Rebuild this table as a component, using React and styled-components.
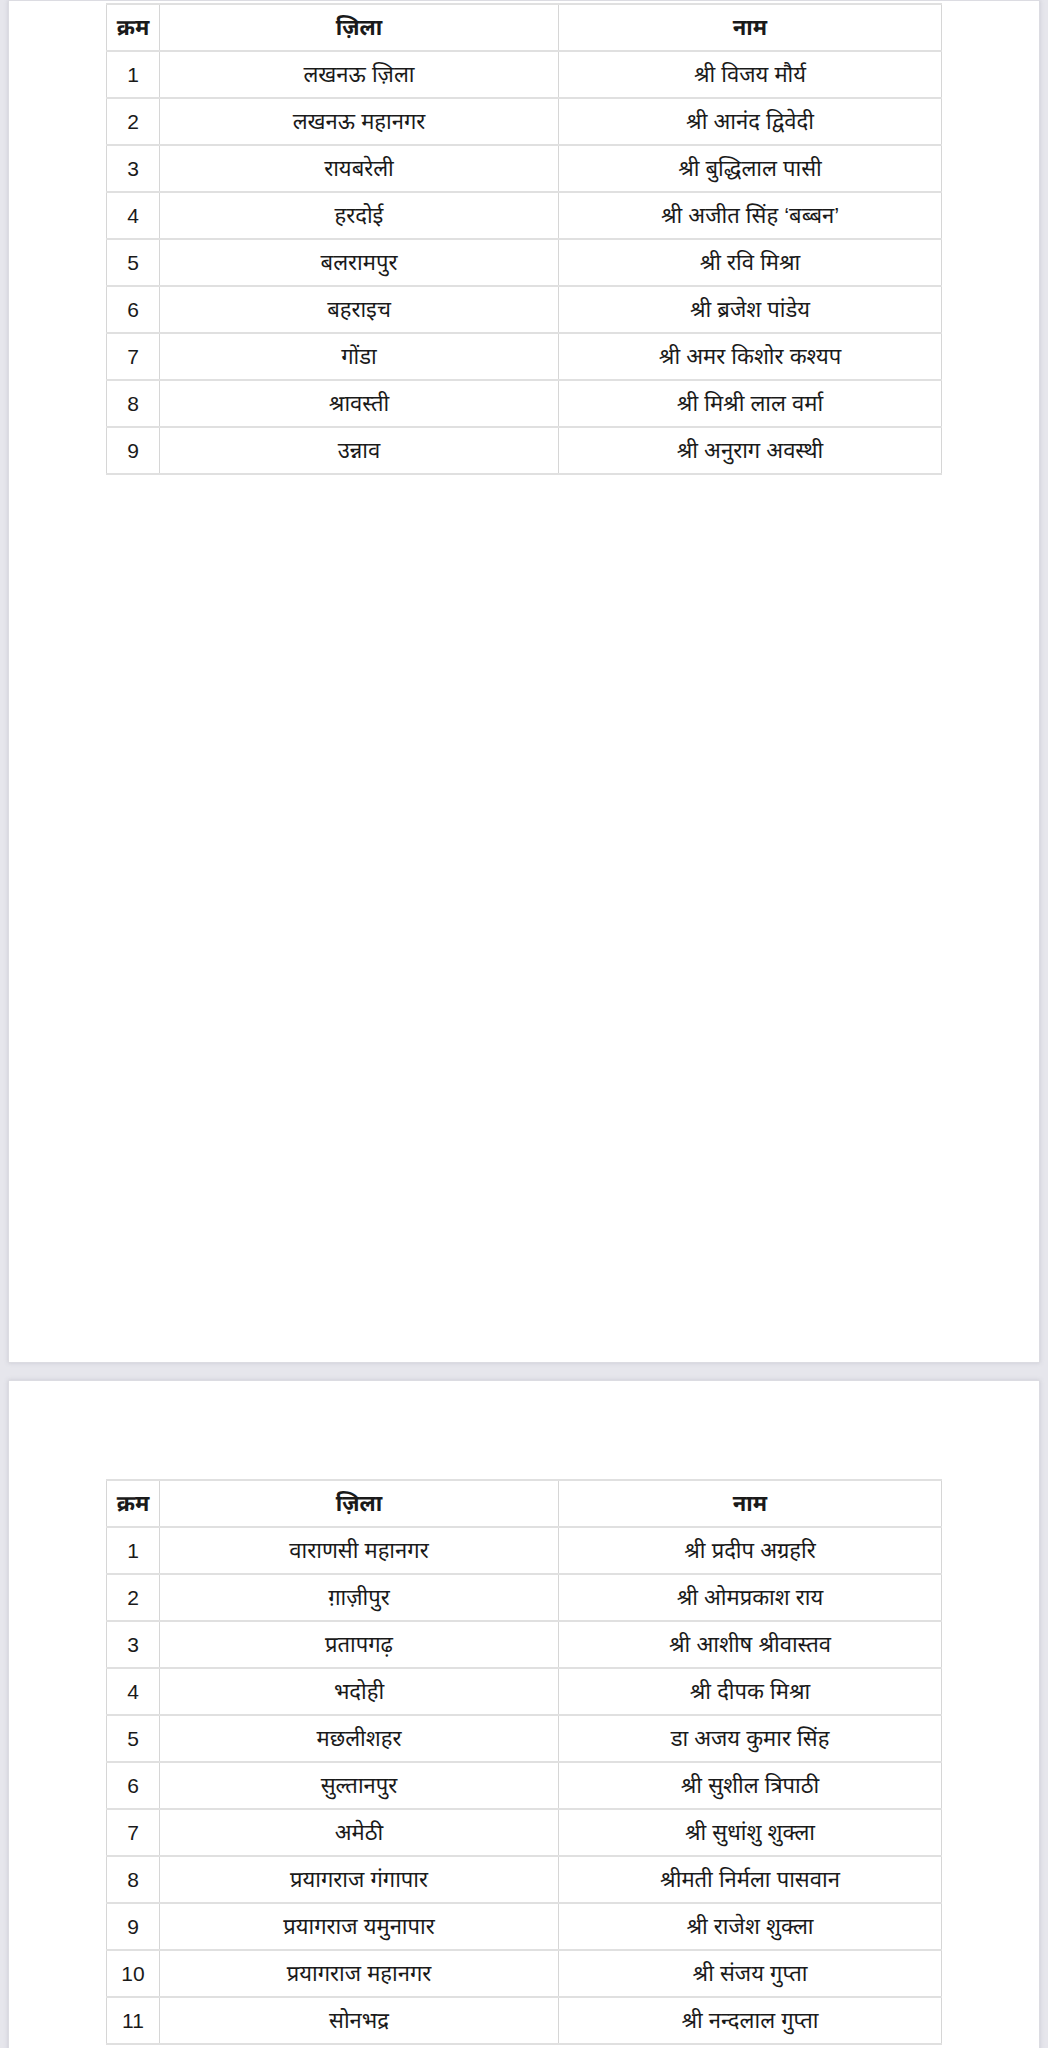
import React from 'react'
import styled, { createGlobalStyle } from 'styled-components'

const GlobalStyle = createGlobalStyle`
  html, body {
    margin: 0;
    padding: 0;
    background: #e6e6ec;
  }
  body {
    font-family: "Liberation Sans", "Noto Sans Devanagari", "Noto Sans", sans-serif;
    color: #1a1a1a;
  }
`

const firstPage = [
  ['1', 'लखनऊ ज़िला', 'श्री विजय मौर्य'],
  ['2', 'लखनऊ महानगर', 'श्री आनंद द्विवेदी'],
  ['3', 'रायबरेली', 'श्री बुद्धिलाल पासी'],
  ['4', 'हरदोई', 'श्री अजीत सिंह ‘बब्बन’'],
  ['5', 'बलरामपुर', 'श्री रवि मिश्रा'],
  ['6', 'बहराइच', 'श्री ब्रजेश पांडेय'],
  ['7', 'गोंडा', 'श्री अमर किशोर कश्यप'],
  ['8', 'श्रावस्ती', 'श्री मिश्री लाल वर्मा'],
  ['9', 'उन्नाव', 'श्री अनुराग अवस्थी'],
]

const secondPage = [
  ['1', 'वाराणसी महानगर', 'श्री प्रदीप अग्रहरि'],
  ['2', 'ग़ाज़ीपुर', 'श्री ओमप्रकाश राय'],
  ['3', 'प्रतापगढ़', 'श्री आशीष श्रीवास्तव'],
  ['4', 'भदोही', 'श्री दीपक मिश्रा'],
  ['5', 'मछलीशहर', 'डा अजय कुमार सिंह'],
  ['6', 'सुल्तानपुर', 'श्री सुशील त्रिपाठी'],
  ['7', 'अमेठी', 'श्री सुधांशु शुक्ला'],
  ['8', 'प्रयागराज गंगापार', 'श्रीमती निर्मला पासवान'],
  ['9', 'प्रयागराज यमुनापार', 'श्री राजेश शुक्ला'],
  ['10', 'प्रयागराज महानगर', 'श्री संजय गुप्ता'],
  ['11', 'सोनभद्र', 'श्री नन्दलाल गुप्ता'],
]

function DistrictTable({ rows }) {
  return (
    <Table>
      <colgroup>
        <col style={{ width: 53 }} />
        <col style={{ width: 399 }} />
        <col style={{ width: 383 }} />
      </colgroup>
      <thead>
        <tr>
          <HeadCell>क्रम</HeadCell>
          <HeadCell>ज़िला</HeadCell>
          <HeadCell>नाम</HeadCell>
        </tr>
      </thead>
      <tbody>
        {rows.map(([num, district, name]) => (
          <tr key={num}>
            <Cell $num>{num}</Cell>
            <Cell>{district}</Cell>
            <Cell>{name}</Cell>
          </tr>
        ))}
      </tbody>
    </Table>
  )
}

export default function App() {
  return (
    <Viewer>
      <GlobalStyle />
      <Page $top={2} $height={1363}>
        <DistrictTable rows={firstPage} />
      </Page>
      <Page $top={98} $height={700}>
        <DistrictTable rows={secondPage} />
      </Page>
    </Viewer>
  )
}

const Viewer = styled.div`
  display: flex;
  flex-direction: column;
  gap: 17px;
  padding: 0 8px;
  height: 2048px;
  overflow: hidden;
`

const Page = styled.div`
  flex-shrink: 0;
  box-sizing: border-box;
  min-height: ${(p) => p.$height}px;
  padding: ${(p) => p.$top}px 97px 0;
  background: #fff;
  border: 1px solid #dcdce2;
  box-shadow: 0 0 4px rgba(120, 120, 140, 0.25);
`

const Table = styled.table`
  width: 835px;
  border-collapse: collapse;
  table-layout: fixed;
`

const Cell = styled.td`
  height: 45px;
  padding: 0;
  text-align: center;
  vertical-align: middle;
  font-size: ${(p) => (p.$num ? 21 : 22)}px;
  line-height: 1;
  white-space: nowrap;
  border-left: 1px solid #d6d6d6;
  border-right: 1px solid #d6d6d6;
  border-top: 2px solid #e0e0e0;
  border-bottom: 2px solid #e0e0e0;
`

const HeadCell = styled(Cell).attrs({ as: 'th' })`
  font-weight: 700;
`
